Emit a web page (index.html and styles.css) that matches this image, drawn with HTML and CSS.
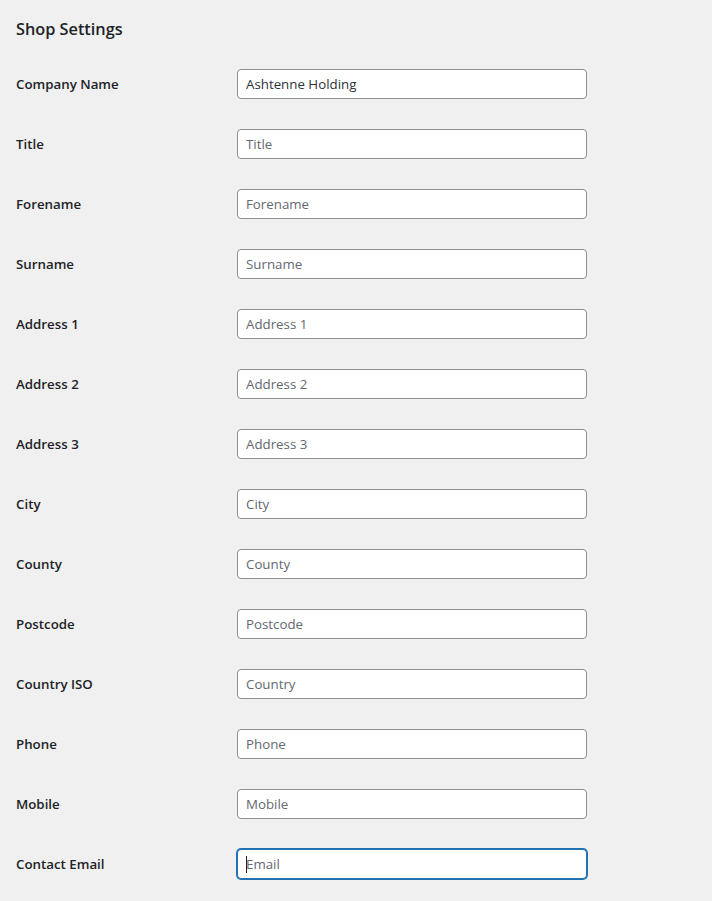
FILE: index.html
```html
<!DOCTYPE html>
<html lang="en">
<head>
    <meta charset="UTF-8">
    <meta name="viewport" content="width=device-width, initial-scale=1.0">
    <title>Shop Settings</title>
    <link rel="stylesheet" href="styles.css">
</head>
<body>

<div class="wrap">
    <h2>Shop Settings</h2>

    <form class="form-table">
        <div class="row">
            <label for="company">Company Name</label>
            <input type="text" id="company" value="Ashtenne Holding" placeholder="Company Name">
        </div>
        <div class="row">
            <label for="title">Title</label>
            <input type="text" id="title" placeholder="Title">
        </div>
        <div class="row">
            <label for="forename">Forename</label>
            <input type="text" id="forename" placeholder="Forename">
        </div>
        <div class="row">
            <label for="surname">Surname</label>
            <input type="text" id="surname" placeholder="Surname">
        </div>
        <div class="row">
            <label for="address1">Address 1</label>
            <input type="text" id="address1" placeholder="Address 1">
        </div>
        <div class="row">
            <label for="address2">Address 2</label>
            <input type="text" id="address2" placeholder="Address 2">
        </div>
        <div class="row">
            <label for="address3">Address 3</label>
            <input type="text" id="address3" placeholder="Address 3">
        </div>
        <div class="row">
            <label for="city">City</label>
            <input type="text" id="city" placeholder="City">
        </div>
        <div class="row">
            <label for="county">County</label>
            <input type="text" id="county" placeholder="County">
        </div>
        <div class="row">
            <label for="postcode">Postcode</label>
            <input type="text" id="postcode" placeholder="Postcode">
        </div>
        <div class="row">
            <label for="country">Country ISO</label>
            <input type="text" id="country" placeholder="Country">
        </div>
        <div class="row">
            <label for="phone">Phone</label>
            <input type="text" id="phone" placeholder="Phone">
        </div>
        <div class="row">
            <label for="mobile">Mobile</label>
            <input type="text" id="mobile" placeholder="Mobile">
        </div>
        <div class="row">
            <label for="email">Contact Email</label>
            <span class="field is-focused">
                <span class="caret"></span>
                <input type="email" id="email" placeholder="Email">
            </span>
        </div>
    </form>
</div>

</body>
</html>
```

FILE: styles.css
```css
body {
    margin: 0;
    background: #f0f0f1;
    color: #1d2327;
    font-family: "Open Sans", "Noto Sans", sans-serif;
    font-size: 14px;
}

.wrap {
    padding: 17px 16px 0 16px;
}

h2 {
    margin: 0 0 13px 0;
    font-size: 16.3px;
    font-weight: 600;
    line-height: 24px;
}

.row {
    display: grid;
    grid-template-columns: 221px 350px;
    align-items: center;
    height: 60px;
}

.row label {
    font-size: 13.3px;
    font-weight: 600;
}

.row input {
    box-sizing: border-box;
    width: 350px;
    height: 30px;
    padding: 0 8px;
    border: 1px solid #8c8f94;
    border-radius: 4px;
    background: #fff;
    color: #2c3338;
    font-family: inherit;
    font-size: 13.3px;
    outline: none;
}

.row input::placeholder {
    color: #646970;
}

.field {
    position: relative;
    display: block;
    width: 350px;
}

.field.is-focused input {
    border-color: #2271b1;
    box-shadow: 0 0 0 1px #2271b1;
}

.caret {
    position: absolute;
    left: 9px;
    top: 7px;
    width: 1px;
    height: 17px;
    background: #1d2327;
}
```
